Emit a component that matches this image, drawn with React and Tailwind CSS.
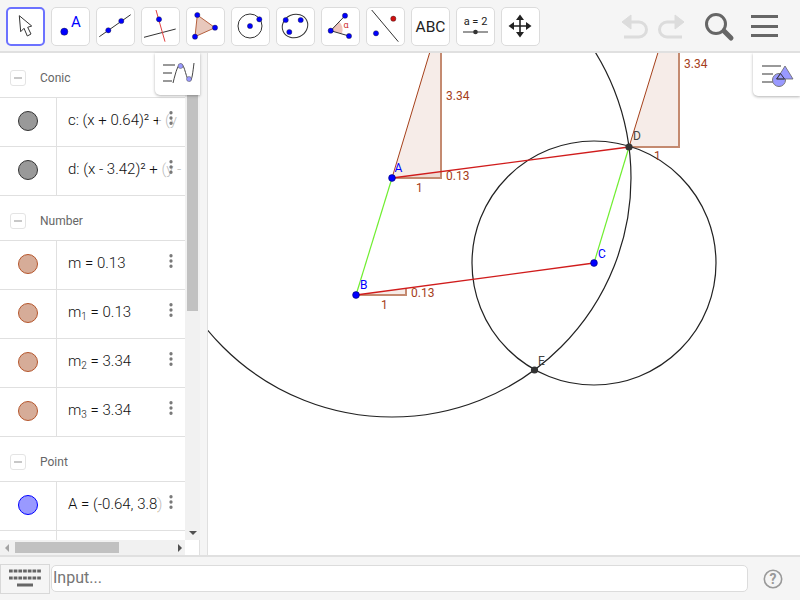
import { EllipsisVertical } from 'lucide-react';

const BLUE = '#0000ff';

// Small helper for the blue handles used in the toolbar icons
function Dot({ x, y, r = 2.6, fill = BLUE }) {
    return <circle cx={x} cy={y} r={r} fill={fill} stroke="#222" strokeWidth="0.4" />;
}

const toolIcons = [
    <path d="M13.3 8.7 L14.7 24.7 L18 21.3 L21.3 29 L25 27 L21.7 20.3 L25.7 19 Z" fill="#fff" stroke="#333" strokeWidth="1" strokeLinejoin="round" />,
    <>
        <Dot x={13.3} y={24.7} r={3.6} />
        <text x={20} y={20} fontSize="15" fill={BLUE} fontFamily="Roboto, sans-serif">A</text>
    </>,
    <>
        <line x1="3.3" y1="29.7" x2="34.7" y2="7.7" stroke="#333" />
        <Dot x={12.3} y={23.3} />
        <Dot x={25.3} y={14} />
    </>,
    <>
        <line x1="3" y1="30.3" x2="34.7" y2="22" stroke="#333" />
        <line x1="15" y1="3" x2="24" y2="34.7" stroke="#e04040" />
        <Dot x={18} y={12.3} />
    </>,
    <>
        <polygon points="11.3,8 29,20.7 9,29.7" fill="#e8c8bc" stroke="#b5613f" strokeWidth="1" />
        <Dot x={11.3} y={8} />
        <Dot x={29} y={20.7} />
        <Dot x={9} y={29.7} />
    </>,
    <>
        <circle cx="19" cy="19" r="12" fill="none" stroke="#333" />
        <Dot x={19} y={19} />
        <Dot x={28.3} y={12.3} />
    </>,
    <>
        <ellipse cx="19" cy="19" rx="13" ry="11.5" transform="rotate(-25 19 19)" fill="none" stroke="#333" />
        <Dot x={9.7} y={13} />
        <Dot x={24.7} y={13} />
        <Dot x={13.3} y={25} />
    </>,
    <>
        <path d="M9.7 23.7 L18 14.4 A12 12 0 0 1 21 26.5 Z" fill="#eec4bc" />
        <path d="M24 8.7 L9.7 23.7 L28 29" fill="none" stroke="#333" />
        <text x={22.5} y={21} fontSize="9" fill="#d03030" fontFamily="Roboto, sans-serif">α</text>
        <Dot x={9.7} y={23.7} />
        <Dot x={24} y={8.7} />
        <Dot x={28} y={29} />
    </>,
    <>
        <line x1="5.7" y1="3" x2="32.3" y2="34.7" stroke="#333" />
        <Dot x={27.3} y={11.7} fill="#d01010" />
        <Dot x={10} y={26.3} />
    </>,
    <text x="19.5" y="25" fontSize="15.5" textAnchor="middle" fill="#222" fontFamily="Roboto, sans-serif">ABC</text>,
    <>
        <text x="19.5" y="18" fontSize="11" textAnchor="middle" fill="#222" fontFamily="Roboto, sans-serif">a = 2</text>
        <line x1="7" y1="25" x2="32" y2="25" stroke="#555" strokeWidth="1.2" />
        <circle cx="19.5" cy="25" r="2.3" fill="#333" />
    </>,
    <>
        <path d="M19 9 V29 M9 19 H29" stroke="#222" strokeWidth="1.6" />
        <path d="M19 7.5 L23 13 H15 Z M19 30.5 L23 25 H15 Z M7.5 19 L13 15 V23 Z M30.5 19 L25 15 V23 Z" fill="#222" />
    </>,
];

function Toolbar() {
    return (
        <div className="h-[53px] shrink-0 flex items-start pt-[7px] pl-[6px] bg-[#f5f5f5] border-b-2 border-[#e0e0e0]">
            <div className="flex gap-[6px]">
                {toolIcons.map((icon, i) => (
                    <div
                        key={i}
                        className={`w-[39px] h-[39px] rounded-[5px] bg-white ${i === 0 ? 'border-2 border-[#6c72ff]' : 'border border-[#dcdcdc]'}`}
                    >
                        <svg width="39" height="39" viewBox="0 0 39 39" className={i === 0 ? '-m-[2px]' : '-m-px'}>
                            {icon}
                        </svg>
                    </div>
                ))}
            </div>
            <svg width="66" height="46" viewBox="0 0 66 46" className="ml-[80px] -mt-[1px] shrink-0" fill="none" stroke="#dcdcdc" strokeWidth="3">
                <path d="M4 16 H19 A7.5 7.5 0 0 1 19 31 H4" />
                <path d="M2 16 L11 9 V23 Z" fill="#dcdcdc" strokeWidth="1" />
                <path d="M62 16 H47 A7.5 7.5 0 0 0 47 31 H62" />
                <path d="M64 16 L55 9 V23 Z" fill="#dcdcdc" strokeWidth="1" />
            </svg>
            <svg width="34" height="40" viewBox="0 0 34 40" className="ml-[17px] -mt-[1px] shrink-0" fill="none" stroke="#666">
                <circle cx="13" cy="18" r="9.5" strokeWidth="3" />
                <line x1="21" y1="25" x2="28" y2="32" strokeWidth="5" strokeLinecap="round" />
            </svg>
            <div className="ml-[14px] mt-[8px] w-[27px] flex flex-col gap-[6.7px]">
                <div className="h-[3px] bg-[#666]" />
                <div className="h-[3px] bg-[#666]" />
                <div className="h-[3px] bg-[#666]" />
            </div>
        </div>
    );
}

function GroupHeader({ label }) {
    return (
        <div className="h-[45px] shrink-0 flex items-center pt-[6px] border-b border-[#e0e0e0] bg-white">
            <div className="ml-[10px] w-[16px] h-[16px] rounded-[3px] border border-[#e4e4e4] flex items-center justify-center">
                <div className="w-[8px] h-[2px] bg-[#c8c8c8]" />
            </div>
            <span className="ml-[14px] text-[12px] text-[#666]">{label}</span>
        </div>
    );
}

function Row({ color, edge, children }) {
    return (
        <div className="relative h-[49px] shrink-0 flex border-b border-[#e0e0e0] bg-white">
            <div className="w-[57px] shrink-0 flex items-center justify-center pb-[3px] border-r border-[#e0e0e0]">
                <div className="w-[20px] h-[20px] rounded-full border" style={{ background: color, borderColor: edge }} />
            </div>
            <div className="flex-1 pl-[11px] pb-[3px] flex items-center text-[15px] font-light text-[#111] whitespace-nowrap overflow-hidden">
                {children}
            </div>
            {/* The menu button sits over long values and fades them */}
            <div className="absolute left-[158px] top-0 w-[24px] h-[48px] bg-white/70">
                <EllipsisVertical size={18} strokeWidth={2.4} className="absolute left-[4px] top-[11px] text-[#777]" />
            </div>
        </div>
    );
}

function AlgebraPanel() {
    const conic = ['#999999', '#333333'];
    const num = ['#d6ac98', '#b5562c'];
    return (
        <div className="relative w-[208px] shrink-0 flex flex-col border-r border-[#e0e0e0] bg-[#f5f5f5]">
            <div className="w-[200px] h-full flex flex-col border-r border-[#e0e0e0] bg-white">
                <div className="flex-1 min-h-0 flex">
                    <div className="w-[185px] shrink-0 overflow-hidden flex flex-col">
                        <GroupHeader label="Conic" />
                        <Row color={conic[0]} edge={conic[1]}>c: (x + 0.64)² + (y</Row>
                        <Row color={conic[0]} edge={conic[1]}>d: (x - 3.42)² + (y -</Row>
                        <GroupHeader label="Number" />
                        <Row color={num[0]} edge={num[1]}>m = 0.13</Row>
                        <Row color={num[0]} edge={num[1]}>
                            <span>m<sub className="text-[10px]">1</sub> = 0.13</span>
                        </Row>
                        <Row color={num[0]} edge={num[1]}>
                            <span>m<sub className="text-[10px]">2</sub> = 3.34</span>
                        </Row>
                        <Row color={num[0]} edge={num[1]}>
                            <span>m<sub className="text-[10px]">3</sub> = 3.34</span>
                        </Row>
                        <GroupHeader label="Point" />
                        <Row color="#9999ff" edge="#0000ff">A = (-0.64, 3.8)</Row>
                        <Row color="#9999ff" edge="#0000ff" />
                    </div>
                    <div className="w-[15px] shrink-0 bg-[#f1f1f1] relative">
                        <div className="ml-[2px] w-[11px] h-[258px] bg-[#c1c1c1]" />
                        <div className="absolute left-[4px] bottom-[5px] w-0 h-0 border-x-[4px] border-x-transparent border-t-[4px] border-t-[#505050]" />
                    </div>
                </div>
                <div className="h-[15px] shrink-0 flex">
                    <div className="w-[185px] h-full bg-[#f1f1f1] flex items-center relative">
                        <div className="absolute left-[5px] w-0 h-0 border-y-[4px] border-y-transparent border-r-[4px] border-r-[#a3a3a3]" />
                        <div className="ml-[15px] w-[104px] h-[11px] bg-[#c1c1c1]" />
                        <div className="absolute right-[3px] w-0 h-0 border-y-[4px] border-y-transparent border-l-[4px] border-l-[#505050]" />
                    </div>
                </div>
            </div>
            <div className="absolute left-[155px] top-0 w-[45px] h-[42px] bg-white rounded-bl-[5px] shadow-[0_1px_3px_rgba(0,0,0,0.3)] flex items-center justify-center">
                <svg width="34" height="26" viewBox="0 0 34 26">
                    <g stroke="#999" strokeWidth="2">
                        <line x1="2" y1="4" x2="14" y2="4" />
                        <line x1="2" y1="12" x2="11" y2="12" />
                        <line x1="2" y1="20" x2="11" y2="20" />
                    </g>
                    <path d="M12 22 C15 10 17 3 20 3 C24 3 25 20 29 20 C31 20 32 10 33 2" fill="none" stroke="#444" strokeWidth="1" />
                    <circle cx="19.5" cy="5" r="2.5" fill="#9999ff" stroke="#555" strokeWidth="0.5" />
                    <circle cx="28" cy="18" r="2.5" fill="#9999ff" stroke="#555" strokeWidth="0.5" />
                </svg>
            </div>
        </div>
    );
}

// Canvas drawing coordinates are page coordinates, shifted by the viewBox origin
function GeoCanvas() {
    const brown = '#a5401a';
    const label = { fontFamily: 'Roboto, sans-serif', fontSize: 12 };
    return (
        <div className="relative flex-1 min-w-0 overflow-hidden bg-white">
            <svg width="592" height="502" viewBox="208 53 592 502" className="block">
                <polygon points="392,178 441,178 441,15" fill="#a5401a" fillOpacity="0.1" />
                <polygon points="629,147 679,147 679,-16" fill="#a5401a" fillOpacity="0.1" />
                <polygon points="356,295 406,295 406,288.5" fill="#a5401a" fillOpacity="0.1" />
                <polygon points="392,178 441,178 441,171.6" fill="#a5401a" fillOpacity="0.1" />

                <g fill="none" stroke="#c48a70" strokeWidth="2">
                    <path d="M441 15 V178 H392" />
                    <path d="M679 -16 V147 H629" />
                    <path d="M406 288.5 V295 H356" />
                </g>
                <g stroke={brown} strokeWidth="1">
                    <line x1="392" y1="178" x2="441" y2="15" />
                    <line x1="629" y1="147" x2="679" y2="-16" />
                </g>

                <circle cx="392" cy="178" r="239" fill="none" stroke="#222" strokeWidth="1.2" />
                <circle cx="594" cy="263" r="122" fill="none" stroke="#222" strokeWidth="1.2" />

                <g stroke="#70ee30" strokeWidth="1.2">
                    <line x1="392" y1="178" x2="356" y2="295" />
                    <line x1="629" y1="147" x2="594" y2="263" />
                </g>
                <g stroke="#d01c1c" strokeWidth="1.3">
                    <line x1="392" y1="178" x2="629" y2="147" />
                    <line x1="356" y1="295" x2="594" y2="263" />
                </g>

                <g fill={BLUE} stroke="#00006a" strokeWidth="0.6">
                    <circle cx="392" cy="178" r="3.4" />
                    <circle cx="356" cy="295" r="3.4" />
                    <circle cx="594" cy="263" r="3.4" />
                </g>
                <g fill="#333">
                    <circle cx="629" cy="147" r="3.6" />
                    <circle cx="534.5" cy="370" r="3.6" />
                </g>

                <g style={label}>
                    <g fill={BLUE}>
                        <text x="394.5" y="172">A</text>
                        <text x="360" y="289">B</text>
                        <text x="598" y="258">C</text>
                    </g>
                    <g fill="#444">
                        <text x="633" y="140">D</text>
                        <text x="538" y="365">E</text>
                    </g>
                    <g fill={brown}>
                        <text x="446" y="100">3.34</text>
                        <text x="684" y="68">3.34</text>
                        <text x="446" y="180">0.13</text>
                        <text x="411" y="297">0.13</text>
                        <text x="416" y="192">1</text>
                        <text x="381" y="309">1</text>
                        <text x="654" y="160">1</text>
                    </g>
                </g>
            </svg>
            <div className="absolute right-0 top-0 w-[47px] h-[43px] bg-white rounded-bl-[5px] shadow-[0_1px_3px_rgba(0,0,0,0.3)] flex items-center justify-center">
                <svg width="34" height="26" viewBox="0 0 34 26">
                    <g stroke="#999" strokeWidth="2">
                        <line x1="2" y1="4" x2="21" y2="4" />
                        <line x1="2" y1="12" x2="13" y2="12" />
                        <line x1="2" y1="20" x2="13" y2="20" />
                    </g>
                    <circle cx="19" cy="18" r="6.5" fill="#9999ff" stroke="#777" strokeWidth="1" />
                    <polygon points="25,4 33,17 17,17" fill="#9999ff" stroke="#666" strokeWidth="0.8" />
                    <polygon points="20.5,11.5 24.5,17 16.5,17" fill="none" stroke="#334" strokeWidth="1" />
                </svg>
            </div>
        </div>
    );
}

function InputBar() {
    return (
        <div className="h-[45px] shrink-0 relative flex items-center bg-[#f5f5f5] border-t-2 border-[#e0e0e0]">
            <div className="w-[50px] h-[30px] shrink-0 mt-[1px] bg-[#f5f5f5] border border-[#d8d8d8] flex items-center justify-center">
                <svg width="34" height="20" viewBox="0 0 34 20" fill="#666">
                    <g stroke="#666" strokeWidth="3" strokeDasharray="3.7 1">
                        <line x1="1" y1="2" x2="33" y2="2" />
                        <line x1="1" y1="9" x2="33" y2="9" />
                    </g>
                    <rect x="9" y="14.5" width="16" height="3" />
                </svg>
            </div>
            <div className="ml-px w-[697px] h-[27px] flex items-center pl-[1px] pb-[2px] bg-white border border-[#dcdcdc] rounded-[5px] text-[16px] text-[#757575]">
                Input...
            </div>
            <svg width="20" height="20" viewBox="0 0 20 20" className="ml-[15px] shrink-0" fill="none">
                <circle cx="10" cy="10" r="8.7" stroke="#999" strokeWidth="1.6" />
                <text x="10" y="15" textAnchor="middle" fontSize="14" fontWeight="700" fill="#999" fontFamily="Roboto, sans-serif">?</text>
            </svg>
        </div>
    );
}

export default function App() {
    return (
        <div className="w-[800px] h-[600px] flex flex-col overflow-hidden bg-white font-['Roboto',sans-serif]">
            <Toolbar />
            <div className="flex-1 min-h-0 flex">
                <AlgebraPanel />
                <GeoCanvas />
            </div>
            <InputBar />
        </div>
    );
}
